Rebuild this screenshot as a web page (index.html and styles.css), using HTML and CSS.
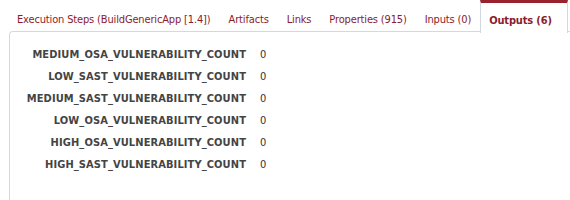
FILE: index.html
```html
<!DOCTYPE html>
<html lang="en">
<head>
	<meta charset="UTF-8">
	<title>Outputs</title>
<link rel="stylesheet" href="styles.css">
</head>
<body>

<div class="result">
	<ul class="tabs">
		<li><a href="#">Execution Steps (BuildGenericApp [1.4])</a></li>
		<li><a href="#">Artifacts</a></li>
		<li><a href="#">Links</a></li>
		<li><a href="#">Properties (915)</a></li>
		<li><a href="#">Inputs (0)</a></li>
		<li class="tab-selected"><a href="#">Outputs (6)</a></li>
	</ul>
	<div class="panel">
		<dl class="outputs">
			<dt>MEDIUM_OSA_VULNERABILITY_COUNT</dt><dd>0</dd>
			<dt>LOW_SAST_VULNERABILITY_COUNT</dt><dd>0</dd>
			<dt>MEDIUM_SAST_VULNERABILITY_COUNT</dt><dd>0</dd>
			<dt>LOW_OSA_VULNERABILITY_COUNT</dt><dd>0</dd>
			<dt>HIGH_OSA_VULNERABILITY_COUNT</dt><dd>0</dd>
			<dt>HIGH_SAST_VULNERABILITY_COUNT</dt><dd>0</dd>
		</dl>
	</div>
</div>

</body>
</html>
```

FILE: styles.css
```css
*{margin:0;padding:0;}
body{font-family:"DejaVu Sans Condensed","DejaVu Sans",sans-serif;font-size:11px;color:#333;background:#fff;}

.result{width:570px;height:200px;overflow:hidden;}
/* tabs */
.tabs{display:flex;list-style:none;padding-left:8px;height:32px;position:relative;z-index:2;}
.tabs li{border:1px solid transparent;border-top:3px solid transparent;border-bottom:none;padding:4px 8px 0;display:flex;align-items:center;letter-spacing:-0.15px;}
.tabs a{color:#8a1c2c;text-decoration:none;white-space:nowrap;}
.tabs .tab-selected{border-color:#d3d9e3;border-top-color:#98232f;background:#fff;height:33px;box-sizing:border-box;padding-right:15px;}
.tabs .tab-selected a{font-weight:bold;}
/* panel */
.panel{margin-left:9px;margin-top:-1px;border:1px solid #d3d9e3;border-right:none;border-bottom:none;border-top-left-radius:4px;height:170px;padding-top:16px;}
.outputs{display:grid;grid-template-columns:236px auto;column-gap:14px;row-gap:8px;}
.outputs dt{text-align:right;font-weight:bold;color:#444;line-height:14px;white-space:nowrap;letter-spacing:0.1px;}
.outputs dd{line-height:14px;color:#333;}
```
